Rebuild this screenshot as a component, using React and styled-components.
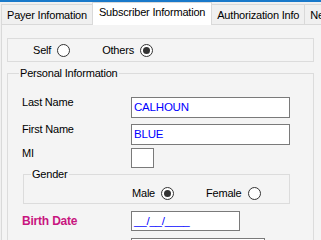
import styled, { createGlobalStyle } from "styled-components";

const GlobalStyle = createGlobalStyle`
  html, body {
    margin: 0;
    padding: 0;
    background: #f0f0f0;
  }
  body {
    font-family: "Liberation Sans", Arial, sans-serif;
    font-size: 11px;
    letter-spacing: -0.2px;
    color: #000;
  }
`;

const Window = styled.div`
  width: 321px;
  height: 240px;
  overflow: hidden;
  display: flex;
  flex-direction: column;
  background: #f0f0f0;
  border-top: 2px solid #1979ca;
  box-sizing: border-box;
`;

const TabStrip = styled.div`
  display: flex;
  align-items: flex-end;
  height: 22px;
  padding-left: 1px;
  flex-shrink: 0;
`;

const Tab = styled.div`
  position: relative;
  z-index: ${(p) => (p.$active ? 1 : 0)};
  height: ${(p) => (p.$active ? 23 : 20)}px;
  margin-bottom: ${(p) => (p.$active ? -1 : 0)}px;
  padding: 0 ${(p) => (p.$active ? 6 : 5)}px;
  line-height: ${(p) => (p.$active ? 19 : 20)}px;
  background: ${(p) => (p.$active ? "#fff" : "#f0f0f0")};
  border: 1px solid #d9d9d9;
  border-bottom: none;
  white-space: nowrap;
  box-sizing: border-box;

  & + & {
    margin-left: -1px;
  }
`;

const Panel = styled.div`
  flex: 1;
  margin-left: 1px;
  padding: 13px 0 0 5px;
  background: #f4f4f4;
  border-top: 1px solid #d9d9d9;
  border-left: 1px solid #d9d9d9;
`;

const ChoiceBox = styled.div`
  width: 307px;
  height: 24px;
  box-sizing: border-box;
  display: flex;
  align-items: center;
  padding-left: 25px;
  border: 1px solid #dcdcdc;
`;

const Option = styled.div`
  display: flex;
  align-items: center;
  gap: 6px;
  margin-left: ${(p) => p.$offset || 0}px;
  line-height: 13px;
`;

const Radio = styled.span`
  width: 13px;
  height: 13px;
  box-sizing: border-box;
  border: 1px solid #333;
  border-radius: 50%;
  background: #fff;
  display: flex;
  align-items: center;
  justify-content: center;

  &::after {
    content: "";
    width: 7px;
    height: 7px;
    border-radius: 50%;
    background: ${(p) => (p.$checked ? "#333" : "transparent")};
  }
`;

const Group = styled.fieldset`
  margin: ${(p) => p.$top || 0}px 0 0 ${(p) => p.$left || 0}px;
  padding: 0 0 ${(p) => p.$bottom || 0}px;
  width: ${(p) => p.$width}px;
  box-sizing: border-box;
  min-width: 0;
  border: 1px solid #dcdcdc;
`;

const Legend = styled.legend`
  margin-left: ${(p) => p.$indent}px;
  padding: 0 1px;
  line-height: 13px;
`;

const Row = styled.div`
  display: flex;
  align-items: ${(p) => (p.$center ? "center" : "flex-start")};
  padding-left: 14px;
  margin-top: ${(p) => p.$top || 0}px;
`;

const Label = styled.div`
  width: 109px;
  flex-shrink: 0;
  line-height: 13px;
  margin-top: ${(p) => (p.$center ? 0 : -1)}px;
  color: ${(p) => (p.$required ? "#c8157f" : "#000")};
  font-weight: ${(p) => (p.$required ? 700 : 400)};
  font-size: ${(p) => (p.$required ? 12 : 11)}px;
`;

const Field = styled.div`
  width: ${(p) => p.$width}px;
  height: ${(p) => p.$height || 21}px;
  box-sizing: border-box;
  padding-left: 2px;
  border: 1px solid #7a7a7a;
  background: #fff;
  color: #0000ff;
  font-size: 11.5px;
  line-height: ${(p) => (p.$height || 21) - 2}px;
  white-space: nowrap;
  overflow: hidden;
`;

const GenderRow = styled.div`
  display: flex;
  align-items: center;
  height: 14px;
  margin-top: 5px;
  padding-left: 108px;
`;

export default function App() {
  return (
    <>
      <GlobalStyle />
      <Window>
        <TabStrip>
          <Tab>Payer Infomation</Tab>
          <Tab $active>Subscriber Information</Tab>
          <Tab>Authorization Info</Tab>
          <Tab>New Info</Tab>
        </TabStrip>
        <Panel>
          <ChoiceBox>
            <Option>
              Self <Radio />
            </Option>
            <Option $offset={32}>
              Others <Radio $checked />
            </Option>
          </ChoiceBox>

          <Group $top={5} $width={307} $bottom={40}>
            <Legend $indent={11}>Personal Information</Legend>

            <Row $top={17}>
              <Label>Last Name</Label>
              <Field $width={159}>CALHOUN</Field>
            </Row>
            <Row $top={6}>
              <Label>First Name</Label>
              <Field $width={159}>BLUE</Field>
            </Row>
            <Row $top={3}>
              <Label>MI</Label>
              <Field $width={23} $height={20} />
            </Row>

            <Group $top={0} $left={15} $width={267} $bottom={3}>
              <Legend $indent={7}>Gender</Legend>
              <GenderRow>
                <Option>
                  Male <Radio $checked />
                </Option>
                <Option $offset={32}>
                  Female <Radio />
                </Option>
              </GenderRow>
            </Group>

            <Row $top={7} $center>
              <Label $required $center>Birth Date</Label>
              <Field $width={109} $height={20}>__/__/____</Field>
            </Row>
            <Row $top={7}>
              <Label />
              <Field $width={134} />
            </Row>
          </Group>
        </Panel>
      </Window>
    </>
  );
}
